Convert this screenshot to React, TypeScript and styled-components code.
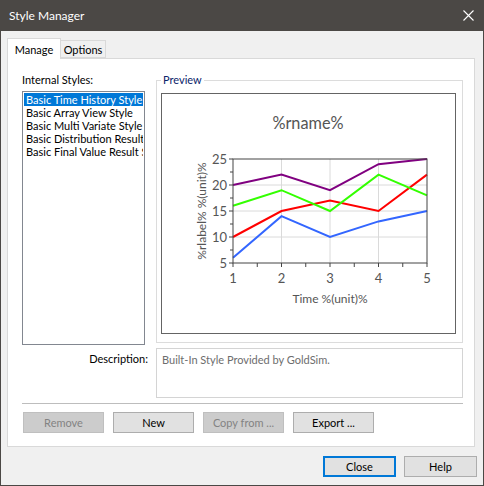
import React from "react";
import styled, { createGlobalStyle } from "styled-components";

const GlobalStyle = createGlobalStyle`
  html, body {
    margin: 0;
    padding: 0;
    background: #f0f0f0;
  }
  * {
    box-sizing: border-box;
  }
`;

const FONT = `Lato, "Noto Sans", sans-serif`;

const styles = [
  "Basic Time History Style",
  "Basic Array View Style",
  "Basic Multi Variate Style",
  "Basic Distribution Result Style",
  "Basic Final Value Result Style",
];

// chart data (x = 1..5)
const series = [
  { color: "#3366ff", values: [6, 14, 10, 13, 15] },
  { color: "#ff0000", values: [10, 15, 17, 15, 22] },
  { color: "#33ff00", values: [16, 19, 15, 22, 18] },
  { color: "#800080", values: [20, 22, 19, 24, 25] },
];

const PLOT = { left: 71, top: 65, width: 194, height: 104 };
const px = (i: number) => PLOT.left + (i * PLOT.width) / 4;
const py = (v: number) => PLOT.top + ((25 - v) * PLOT.height) / 20;

const PreviewChart = () => {
  const yMajor = [5, 10, 15, 20, 25];
  const yMinor = [7.5, 12.5, 17.5, 22.5];
  const xTicks = [0, 0.5, 1, 1.5, 2, 2.5, 3, 3.5, 4];
  return (
    <svg width={293} height={239} viewBox="0 0 293 239">
      <text x={146} y={35} textAnchor="middle" fontSize={16.3} fill="#555" fontFamily={FONT}>
        %rname%
      </text>
      {[1, 2, 3].map((i) => (
        <line key={"gx" + i} x1={px(i)} x2={px(i)} y1={PLOT.top} y2={PLOT.top + PLOT.height} stroke="#dadada" />
      ))}
      {[10, 15, 20].map((v) => (
        <line key={"gy" + v} x1={PLOT.left} x2={PLOT.left + PLOT.width} y1={py(v)} y2={py(v)} stroke="#dadada" />
      ))}
      {series.map((s) => (
        <polyline
          key={s.color}
          points={s.values.map((v, i) => `${px(i)},${py(v)}`).join(" ")}
          fill="none"
          stroke={s.color}
          strokeWidth={2}
        />
      ))}
      <rect x={PLOT.left} y={PLOT.top} width={PLOT.width} height={PLOT.height} fill="none" stroke="#444" />
      {yMajor.map((v) => (
        <line key={"ty" + v} x1={PLOT.left - 4} x2={PLOT.left} y1={py(v)} y2={py(v)} stroke="#444" />
      ))}
      {yMinor.map((v) => (
        <line key={"tm" + v} x1={PLOT.left - 3} x2={PLOT.left} y1={py(v)} y2={py(v)} stroke="#444" />
      ))}
      {xTicks.map((t) => (
        <line
          key={"tx" + t}
          x1={px(t)}
          x2={px(t)}
          y1={PLOT.top + PLOT.height}
          y2={PLOT.top + PLOT.height + 4}
          stroke="#444"
        />
      ))}
      {yMajor.map((v) => (
        <text
          key={"ly" + v}
          x={PLOT.left - 6}
          y={py(v) + 4.5}
          textAnchor="end"
          fontSize={13}
          fill="#555"
          fontFamily={FONT}
        >
          {v}
        </text>
      ))}
      {[1, 2, 3, 4, 5].map((n, i) => (
        <text key={"lx" + n} x={px(i)} y={188.5} textAnchor="middle" fontSize={13} fill="#555" fontFamily={FONT}>
          {n}
        </text>
      ))}
      <text x={168} y={209} textAnchor="middle" fontSize={12} fill="#555" fontFamily={FONT}>
        Time %(unit)%
      </text>
      <text
        x={0}
        y={0}
        transform="translate(44 117) rotate(-90)"
        textAnchor="middle"
        fontSize={12}
        fill="#555"
        fontFamily={FONT}
      >
        %rlabel% %(unit)%
      </text>
    </svg>
  );
};

const CloseGlyph = () => (
  <svg width={11} height={11} viewBox="0 0 11 11">
    <path d="M0.5 0.5 L10.5 10.5 M10.5 0.5 L0.5 10.5" stroke="#fff" strokeWidth={1.1} fill="none" />
  </svg>
);

const App = () => {
  return (
    <>
      <GlobalStyle />
      <Window>
        <TitleBar>
          <TitleText>Style Manager</TitleText>
          <TitleClose>
            <CloseGlyph />
          </TitleClose>
        </TitleBar>

        <Body>
          <TabStrip>
            <Tab active width={54}>
              Manage
            </Tab>
            <Tab width={45}>Options</Tab>
          </TabStrip>

          <TabPanel>
            <MainGrid>
              <LeftColumn>
                <FieldLabel>Internal Styles:</FieldLabel>
                <ListBox>
                  {styles.map((s, i) => (
                    <ListItem key={s} selected={i === 0}>
                      {s}
                    </ListItem>
                  ))}
                </ListBox>
              </LeftColumn>

              <GroupBox>
                <Legend>Preview</Legend>
                <ChartFrame>
                  <PreviewChart />
                </ChartFrame>
              </GroupBox>

              <DescLabel>Description:</DescLabel>
              <DescBox>Built-In Style Provided by GoldSim.</DescBox>
            </MainGrid>

            <Separator />

            <ButtonRow>
              <Button disabled>Remove</Button>
              <Button>New</Button>
              <Button disabled>Copy from ...</Button>
              <Button>Export ...</Button>
            </ButtonRow>
          </TabPanel>

          <Footer>
            <DialogButton primary>Close</DialogButton>
            <DialogButton>Help</DialogButton>
          </Footer>
        </Body>
      </Window>
    </>
  );
};

export default App;

// Styled Components
const Window = styled.div`
  width: 484px;
  height: 486px;
  display: flex;
  flex-direction: column;
  background: #f0f0f0;
  border: 1px solid #4b4845;
  border-top: none;
  font-family: ${FONT};
  font-size: 11px;
  color: #000;
`;

const TitleBar = styled.div`
  height: 31px;
  margin: 0 -1px;
  background: #4b4845;
  display: flex;
  align-items: center;
  justify-content: space-between;
  padding: 0 10px 0 9px;
  color: #fff;
`;

const TitleText = styled.div`
  font-size: 12px;
  padding-bottom: 1px;
`;

const TitleClose = styled.div`
  display: flex;
  align-items: center;
  padding-bottom: 1px;
`;

const Body = styled.div`
  flex: 1;
  display: flex;
  flex-direction: column;
  padding: 7px 0 0 6px;
`;

const TabStrip = styled.div`
  display: flex;
  align-items: flex-end;
  height: 21px;
  margin-bottom: -1px;
  position: relative;
  z-index: 1;
`;

const Tab = styled.div<{ active?: boolean; width: number }>`
  width: ${({ width }) => width}px;
  height: ${({ active }) => (active ? "21px" : "18px")};
  padding-top: ${({ active }) => (active ? "3px" : "1px")};
  margin-bottom: ${({ active }) => (active ? "0" : "1px")};
  text-align: center;
  background: ${({ active }) => (active ? "#fff" : "#f0f0f0")};
  border: 1px solid #d9d9d9;
  border-bottom: ${({ active }) => (active ? "none" : "1px solid #d9d9d9")};
  border-left: ${({ active }) => (active ? "1px solid #d9d9d9" : "none")};
  line-height: 15px;
`;

const TabPanel = styled.div`
  width: 468px;
  height: 389px;
  background: #fff;
  border: 1px solid #d9d9d9;
  padding: 13px 11px 0 14px;
  display: flex;
  flex-direction: column;
`;

const MainGrid = styled.div`
  display: grid;
  grid-template-columns: 123px 307px;
  column-gap: 11px;
  row-gap: 3px;
  align-items: start;
`;

const LeftColumn = styled.div`
  display: flex;
  flex-direction: column;
  gap: 4px;
`;

const FieldLabel = styled.div`
  line-height: 15px;
`;

const ListBox = styled.div`
  height: 254px;
  border: 1px solid #828790;
  padding: 1px;
  background: #fff;
`;

const ListItem = styled.div<{ selected?: boolean }>`
  height: 13px;
  line-height: 13px;
  padding-left: 2px;
  white-space: nowrap;
  overflow: hidden;
  background: ${({ selected }) => (selected ? "#0078d7" : "transparent")};
  color: ${({ selected }) => (selected ? "#fff" : "#000")};
`;

const GroupBox = styled.fieldset`
  margin: 2px 0 0 0;
  padding: 7px 6px 8px 4px;
  border: 1px solid #dcdcdc;
  min-width: 0;
  height: 269px;
`;

const Legend = styled.legend`
  padding: 0 2px;
  margin-left: 0;
  line-height: 12px;
  color: #0a246a;
`;

const ChartFrame = styled.div`
  width: 295px;
  height: 241px;
  border: 1px solid #646464;
  background: #fff;
  display: flex;
`;

const DescLabel = styled.div`
  text-align: right;
  margin-right: -3px;
  padding-top: 3px;
  line-height: 15px;
`;

const DescBox = styled.div`
  height: 50px;
  border: 1px solid #d4d4d4;
  padding: 3px 5px;
  line-height: 15px;
  color: #6d6d6d;
`;

const Separator = styled.div`
  height: 1px;
  margin: 5px 0 8px 0;
  background: #bdbdbd;
`;

const ButtonRow = styled.div`
  display: flex;
  gap: 9px;
  padding-left: 1px;
`;

const Button = styled.button`
  width: 81px;
  height: 21px;
  padding: 0;
  font-family: ${FONT};
  font-size: 11px;
  background: #e1e1e1;
  border: 1px solid #adadad;
  color: #000;

  &:disabled {
    background: #cccccc;
    border-color: #bfbfbf;
    color: #838383;
  }
`;

const Footer = styled.div`
  display: flex;
  justify-content: flex-end;
  gap: 8px;
  margin-top: 9px;
  padding-right: 6px;
`;

const DialogButton = styled.button<{ primary?: boolean }>`
  width: 73px;
  height: 21px;
  padding: 0;
  font-family: ${FONT};
  font-size: 11px;
  background: #e1e1e1;
  color: #000;
  border: ${({ primary }) => (primary ? "2px solid #0078d7" : "1px solid #adadad")};
`;
